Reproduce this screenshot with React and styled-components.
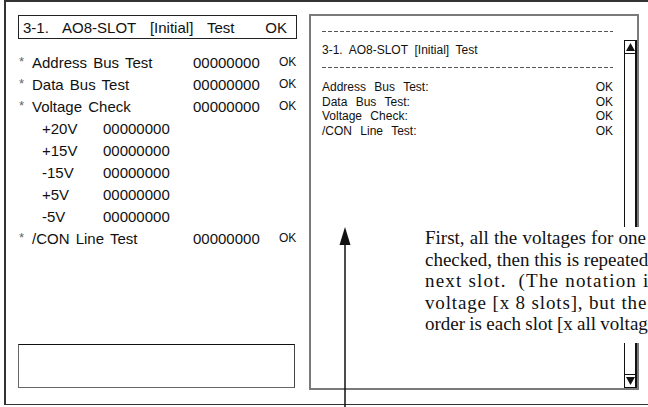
import React from "react";
import styled, { createGlobalStyle } from "styled-components";

const GlobalStyle = createGlobalStyle`
  html, body {
    margin: 0;
    padding: 0;
    background: #fff;
    overflow: hidden;
  }
  body {
    width: 648px;
    height: 407px;
    position: relative;
    font-family: "Liberation Sans", Arial, sans-serif;
    color: #111;
  }
`;

const Frame = styled.div`
  box-sizing: border-box;
  margin-left: 4px;
  width: 700px;
  height: 405px;
  border: 2px solid #333;
  border-right: none;
  border-bottom-width: 1.5px;
  display: flex;
  gap: 12px;
  padding: 13px 0 14px 12px;
`;

const LeftPanel = styled.div`
  width: 279px;
  display: flex;
  flex-direction: column;
`;

const Header = styled.div`
  box-sizing: border-box;
  height: 24px;
  border: 1.5px solid #222;
  display: flex;
  align-items: center;
  justify-content: space-between;
  padding: 0 9px 0 4px;
  font-size: 15px;
  white-space: pre;
  word-spacing: 0.5px;
`;

const Rows = styled.div`
  margin-top: 12px;
  display: flex;
  flex-direction: column;
`;

const TestRow = styled.div`
  display: grid;
  grid-template-columns: 14px 161px 86px 1fr;
  align-items: center;
  height: 22px;
  font-size: 15px;
  word-spacing: 2px;
`;

const Star = styled.span`
  font-size: 13px;
  color: #666;
  align-self: start;
  padding-top: 3px;
  padding-left: 1px;
`;

const Ok = styled.span`
  font-size: 12px;
`;

const VoltRow = styled.div`
  display: grid;
  grid-template-columns: 61px 1fr;
  align-items: center;
  height: 22px;
  padding-left: 24px;
  font-size: 15px;
`;

const NoteBox = styled.div`
  box-sizing: border-box;
  margin-top: auto;
  margin-bottom: 2px;
  width: 277px;
  height: 44px;
  border: 1.5px solid;
  border-color: #111 #444 #666 #666;
`;

const RightPanel = styled.div`
  box-sizing: border-box;
  width: 330px;
  margin-top: -1px;
  border: 2px solid #7a7a7a;
  display: flex;
`;

const Log = styled.div`
  flex: 1;
  padding: 15px 11px 0 11px;
  font-size: 12px;
`;

const Dashes = styled.div`
  height: 1px;
  background: repeating-linear-gradient(to right, #555 0 4px, transparent 4px 6px);
`;

const LogTitle = styled.div`
  height: 35px;
  display: flex;
  align-items: center;
  white-space: pre;
`;

const LogRows = styled.div`
  margin-top: 12px;
`;

const LogRow = styled.div`
  display: flex;
  justify-content: space-between;
  height: 14.5px;
  line-height: 14.5px;
  word-spacing: 5px;
`;

const Scrollbar = styled.div`
  width: 10px;
  margin-top: 24px;
  border-left: 1px solid #111;
  border-right: 2px solid #111;
  display: flex;
  flex-direction: column;
  justify-content: space-between;
`;

const ArrowButton = styled.div`
  height: 12px;
  border-top: 1px solid #111;
  border-bottom: 1px solid #111;
  display: flex;
  align-items: center;
  justify-content: center;
`;

const Callout = styled.div`
  position: absolute;
  left: 422px;
  top: 227px;
  width: 300px;
  padding: 0 0 8px 3px;
  background: #fff;
  font-family: "Liberation Serif", "Times New Roman", serif;
  font-size: 19px;
  line-height: 21.6px;
  color: #111;
`;

const CalloutLine = styled.div`
  white-space: pre;
  letter-spacing: ${(p) => p.$ls || 0}px;
  word-spacing: ${(p) => p.$ws || 0}px;
`;

const Pointer = styled.svg`
  position: absolute;
  left: 333px;
  top: 225px;
`;

const tests = [
  { name: "Address Bus Test", value: "00000000" },
  { name: "Data Bus Test", value: "00000000" },
  { name: "Voltage Check", value: "00000000" },
];

const voltages = ["+20V", "+15V", "-15V", "+5V", "-5V"];

const log = ["Address Bus Test:", "Data Bus Test:", "Voltage Check:", "/CON Line Test:"];

function Triangle({ down }) {
  return (
    <svg width="9" height="8" viewBox="0 0 9 8">
      <polygon points={down ? "0,0 9,0 4.5,8" : "4.5,0 9,8 0,8"} fill="#111" />
    </svg>
  );
}

export default function App() {
  return (
    <>
      <GlobalStyle />
      <Frame>
        <LeftPanel>
          <Header>
            <span>{"3-1.   AO8-SLOT   [Initial]   Test"}</span>
            <span>OK</span>
          </Header>
          <Rows>
            {tests.map((t) => (
              <TestRow key={t.name}>
                <Star>*</Star>
                <span>{t.name}</span>
                <span>{t.value}</span>
                <Ok>OK</Ok>
              </TestRow>
            ))}
            {voltages.map((v) => (
              <VoltRow key={v}>
                <span>{v}</span>
                <span>00000000</span>
              </VoltRow>
            ))}
            <TestRow>
              <Star>*</Star>
              <span>/CON Line Test</span>
              <span>00000000</span>
              <Ok>OK</Ok>
            </TestRow>
          </Rows>
          <NoteBox />
        </LeftPanel>

        <RightPanel>
          <Log>
            <Dashes />
            <LogTitle>{"3-1.  AO8-SLOT  [Initial]  Test"}</LogTitle>
            <Dashes />
            <LogRows>
              {log.map((l) => (
                <LogRow key={l}>
                  <span>{l}</span>
                  <span>OK</span>
                </LogRow>
              ))}
            </LogRows>
          </Log>
          <Scrollbar>
            <ArrowButton>
              <Triangle />
            </ArrowButton>
            <ArrowButton>
              <Triangle down />
            </ArrowButton>
          </Scrollbar>
        </RightPanel>
      </Frame>

      <Pointer width="24" height="182" viewBox="0 0 24 182">
        <polygon points="12,2 17.5,20 6.5,20" fill="#111" />
        <line x1="12" y1="18" x2="12" y2="182" stroke="#111" strokeWidth="1.5" />
      </Pointer>

      <Callout>
        <CalloutLine $ws={0.5}>First, all the voltages for one slot are</CalloutLine>
        <CalloutLine>checked, then this is repeated for the</CalloutLine>
        <CalloutLine $ls={1.2}>{"next slot.  (The notation is each"}</CalloutLine>
        <CalloutLine $ls={0.85}>voltage [x 8 slots], but the actual</CalloutLine>
        <CalloutLine $ws={-0.5}>order is each slot [x all voltages].)</CalloutLine>
      </Callout>
    </>
  );
}
